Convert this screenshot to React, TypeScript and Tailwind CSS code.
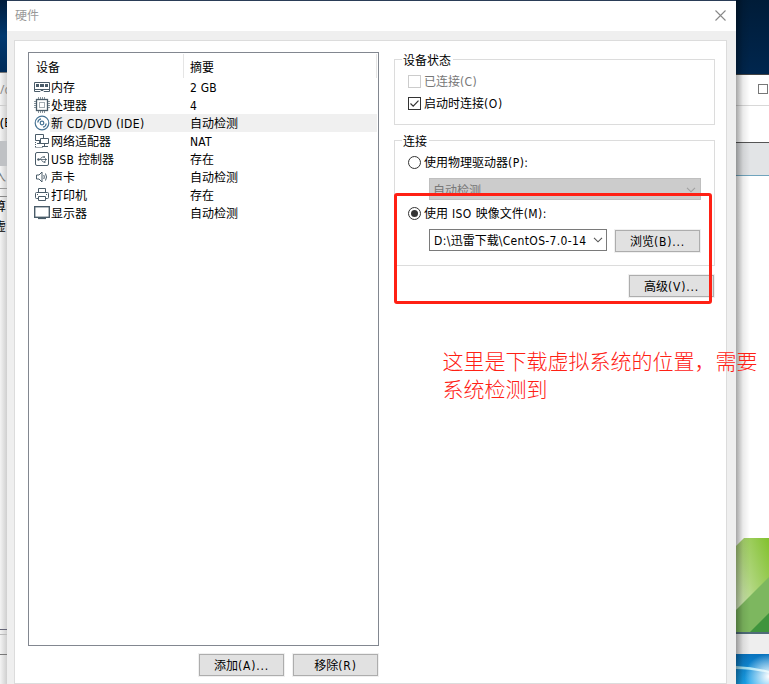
import React from 'react';
import clsx from 'clsx';

const ink = '#4a5c69';

// Latin runs use a narrower Tahoma-like face next to the Chinese
function Label({ text, className = 'tracking-[0.35px]' }: { text: string; className?: string }) {
  const runs = text.split(/([\u4e00-\u9fff]+)/).filter(Boolean);
  return (
    <span className="relative top-px whitespace-pre text-[12px] leading-[18px]">
      {runs.map((run, i) => (
        <span key={i} className={/[\u4e00-\u9fff]/.test(run) ? '' : clsx("font-['DejaVu_Sans_Condensed','Noto_Sans',sans-serif] leading-none", className)}>{run}</span>
      ))}
    </span>
  );
}

const icons: Record<string, React.ReactNode> = {
  memory: (
    <>
      <path d="M.5 3.5h15v9H10l-1-1H7l-1 1H.5z" fill="#fff" stroke={ink} />
      <path d="M2 5h3v3H2zM6 5h4v3H6zM11 5h3v3h-3z" fill={ink} />
      <path d="M1 10.5h14" stroke={ink} />
    </>
  ),
  cpu: (
    <>
      <path d="M4.5 0v16M6.5 0v16M8.5 0v16M10.5 0v16M0 4.5h16M0 6.5h16M0 8.5h16M0 10.5h16" stroke="#8a969e" />
      <rect x="2.5" y="2.5" width="11" height="11" fill="#fff" stroke={ink} strokeWidth="1.3" />
      <rect x="5.500" y="5.500" width="5" height="5" fill="none" stroke={ink} strokeDasharray="1 1" />
    </>
  ),
  disc: (
    <>
      <circle cx="8" cy="8" r="6.8" fill="#fff" stroke="#467394" strokeWidth="1.2" />
      <circle cx="8" cy="8" r="1.8" fill="none" stroke="#467394" strokeWidth="1.2" />
      <path d="M3.8 7.5A4 4 0 0 1 7 3.9M12.2 8.5A4 4 0 0 1 9 12.1" fill="none" stroke="#467394" strokeWidth="1.2" />
    </>
  ),
  network: (
    <>
      <path d="M1.5 1.5h8v6h-8zM5.5 7.5v3M3 10.5h4" fill="#fff" stroke={ink} />
      <path d="M6.5 5.5h8v5h-8zM10.5 10.5v3M8 13.5h6" fill="#fff" stroke={ink} />
      <path d="M1.5 9v6M1.5 14.5h7" fill="none" stroke={ink} strokeDasharray="1 1" />
    </>
  ),
  usb: (
    <>
      <rect x="1.5" y="1.5" width="13" height="13" rx="1.5" fill="#fff" stroke={ink} />
      <path d="M3.5 8.5h9M6 8.5l2-2.500h2M7 8.500l2 2.500h1.500" fill="none" stroke={ink} strokeWidth=".8" />
      <circle cx="4.500" cy="8.500" r="1.200" fill={ink} />
      <path d="M11 7l2 1.500-2 1.500zM9.500 5.200h1.500v1.500H9.500zM10 10.200h1.500v1.500H10z" fill={ink} />
    </>
  ),
  sound: (
    <>
      <path d="M2.5 6v4H5l3 3V3L5 6z" fill="#fff" stroke={ink} />
      <path d="M9.800 6q1 2 0 4M11.500 4.500q2 3.500 0 7" fill="none" stroke={ink} />
    </>
  ),
  printer: (
    <>
      <path d="M4.500 5.500v-4h7v4" fill="#fff" stroke={ink} />
      <rect x="1.500" y="5.500" width="13" height="6" rx="1" fill="#fff" stroke={ink} />
      <path d="M4.500 9.500h7v4h-7z" fill="#fff" stroke={ink} />
      <path d="M3 7.500h1M12 7.500h1" stroke={ink} />
    </>
  ),
  display: (
    <>
      <rect x=".7" y="1.700" width="14.600" height="10.600" fill="#fff" stroke={ink} strokeWidth="1.400" />
      <path d="M4 13.500h8" stroke={ink} strokeWidth="1.200" />
    </>
  ),
};

const devices = [
  { icon: 'memory', name: '内存', summary: '2 GB' },
  { icon: 'cpu', name: '处理器', summary: '4' },
  { icon: 'disc', name: '新 CD/DVD (IDE)', summary: '自动检测', selected: true },
  { icon: 'network', name: '网络适配器', summary: 'NAT' },
  { icon: 'usb', name: 'USB 控制器', summary: '存在' },
  { icon: 'sound', name: '声卡', summary: '自动检测' },
  { icon: 'printer', name: '打印机', summary: '存在' },
  { icon: 'display', name: '显示器', summary: '自动检测' },
];

function Button({ text, className }: { text: string; className?: string }) {
  return (
    <button className={clsx('flex h-[22px] w-[85px] shrink-0 items-center justify-center border border-[#adadad] bg-[#e1e1e1] outline outline-1 outline-[#f0f0f0]', className)}>
      <Label text={text} className="tracking-[0.8px]" />
    </button>
  );
}

function Chevron({ color }: { color: string }) {
  return (
    <svg width="10" height="6" viewBox="0 0 10 6" fill="none" stroke={color} strokeWidth="1.1">
      <path d="M1 .8l4 4 4-4" />
    </svg>
  );
}

function DeviceList() {
  return (
    <div className="h-[594px] w-[351px] border border-[#828790] bg-white">
      <div className="flex h-[25px] pt-px">
        <div className="flex w-[155px] items-center border-r border-[#e5e5e5] pl-[7px] pt-px"><Label text="设备" /></div>
        <div className="flex w-[193px] items-center border-r border-[#e5e5e5] pl-1.5 pt-px"><Label text="摘要" /></div>
      </div>
      {devices.map((d) => (
        <div key={d.name} className="flex h-[18px] items-center pl-[5px] pr-px">
          <svg width="16" height="16" viewBox="0 0 16 16" className="shrink-0">{icons[d.icon]}</svg>
          <div className={clsx('flex h-[18px] flex-1 items-center pl-px', d.selected && 'bg-[#f0f0f0]')}>
            <div className="flex w-[139px]"><Label text={d.name} /></div>
            <Label text={d.summary} className="tracking-[0.2px]" />
          </div>
        </div>
      ))}
    </div>
  );
}

function Group({ title, className, children }: { title: string; className?: string; children: React.ReactNode }) {
  return (
    <div className={clsx('relative w-[321px] border border-[#dcdcdc]', className)}>
      <span className="absolute -top-2.5 left-[7px] flex h-5 items-center bg-white px-px pr-0.5"><Label text={title} /></span>
      {children}
    </div>
  );
}

function Radio({ checked, text }: { checked?: boolean; text: string }) {
  return (
    <div className="flex h-5 items-center gap-[3px]">
      <span className="flex size-[13px] items-center justify-center rounded-full border border-[#333] bg-white">
        {checked && <span className="size-[7px] rounded-full bg-[#333]" />}
      </span>
      <Label text={text} className="tracking-[0.45px]" />
    </div>
  );
}

function Settings() {
  return (
    <div className="relative flex w-[321px] flex-col">
      <Group title="设备状态" className="mt-[7px] h-[66px]">
        <div className="flex flex-col gap-0.5 pl-[13px] pt-[11px]">
          <div className="flex h-5 items-center gap-[3px] text-[#777]">
            <span className="size-[13px] border border-[#ccc]" />
            <Label text="已连接(C)" />
          </div>
          <div className="flex h-5 items-center gap-[3px]">
            <span className="flex size-[13px] items-center justify-center border border-[#333]">
              <svg width="11" height="11" viewBox="0 0 11 11" fill="none" stroke="#333" strokeWidth="1.2"><path d="M1.500 5.500l2.700 2.700 5.300-5.600" /></svg>
            </span>
            <Label text="启动时连接(O)" className="tracking-[0.6px]" />
          </div>
        </div>
      </Group>
      <Group title="连接" className="mt-[15px] h-[126px] pl-[13px] pt-[11px]">
        <Radio text="使用物理驱动器(P):" />
        <div className="ml-[21px] mt-1.5 flex h-[22px] w-[272px] items-center justify-between border border-[#bfbfbf] bg-[#ccc] pl-[3px] pr-1 pt-px text-[#777]">
          <Label text="自动检测" />
          <Chevron color="#a0a0a0" />
        </div>
        <div className="mt-[3px]"><Radio checked text="使用 ISO 映像文件(M):" /></div>
        <div className="ml-[21px] mt-1.5 flex gap-2">
          <div className="flex h-[22px] w-[178px] items-center justify-between border border-[#7a7a7a] bg-white pl-1 pr-[3px]">
            <div className="-mt-px flex w-[154px]"><Label text="D:\迅雷下载\CentOS-7.0-14" /></div>
            <Chevron color="#555" />
          </div>
          <Button text="浏览(B)..." className="mt-px" />
        </div>
      </Group>
      <Button text="高级(V)..." className="ml-[235px] mt-[9px]" />
      {/* highlighted region and its note */}
      <div className="absolute left-0 top-[141px] h-[111px] w-[318px] rounded-[3px] border-3 border-[#ff2014]" />
      <p className="absolute left-[48.500px] top-[295px] whitespace-nowrap text-[21px] leading-[28px] font-light text-[#ff2014]">
        这里是下载虚拟系统的位置，需要<br />系统检测到
      </p>
    </div>
  );
}

function LeftEdge() {
  return (
    <div className="flex w-[7px] shrink-0 flex-col overflow-hidden bg-linear-to-r from-[#f4f4f4] to-[#cfcfcf] whitespace-nowrap">
      <div className="h-[72px] shrink-0 bg-linear-to-b from-[#001c3c] via-[#00386f] to-[#002b59]" />
      <div className="h-[34px] shrink-0 border-t border-b border-t-[#777] border-b-[#ccc] pt-2 text-[12px] leading-[18px] text-[#888]">/c</div>
      <div className="h-[35px] shrink-0 pt-[7px] text-[13px] leading-[18px]">(E</div>
      <div className="h-[25px] shrink-0 bg-[#bfc1c4]" />
      <div className="h-[23px] shrink-0 border-b border-[#999] text-[12px] leading-[22px] text-[#777]"><span className="-ml-1.5">入</span></div>
      <div className="mt-[7px] h-[433px] shrink-0 border-t border-[#888] text-[12px] leading-5"><div className="-ml-1.5">算</div><div className="-ml-1.5">虚</div></div>
      <div className="h-[6px] shrink-0 border-t border-b border-t-[#667] border-b-[#bbb]" />
      <div className="h-[20px] shrink-0 border-b border-[#777]" />
    </div>
  );
}

function RightEdge() {
  return (
    <div className="relative flex w-[33px] shrink-0 flex-col overflow-hidden bg-white">
      <div className="h-[74px] bg-linear-to-b from-[#001c38] to-[#00264e]" />
      <div className="flex h-8 justify-end border-t border-b border-t-[#444] border-b-[#d8d8d8] pr-px pt-[9px]">
        <span className="size-2.5 border border-[#777]" />
      </div>
      <div className="mt-[36px] h-[34px] border-t border-b border-t-[#555] border-b-[#6fa4bd] bg-[#e2e4e6]" />
      <svg width="33" height="94" viewBox="0 0 33 94" className="mt-[362px] shrink-0">
        <defs>
          <linearGradient id="leaf" x1="1" y1="0" x2="0" y2="1">
            <stop offset="0" stopColor="#82c12e" />
            <stop offset=".5" stopColor="#aed57b" />
            <stop offset="1" stopColor="#e8f3dd" />
          </linearGradient>
        </defs>
        <path d="M0 8L8 0h25v94H0z" fill="url(#leaf)" />
        <path d="M0 72L33 39v55H0z" fill="#7db75f" />
        <path d="M14 94L33 75v19z" fill="#3f943d" />
      </svg>
      <div className="h-[22px] border-t-2 border-[#4f6c79] bg-[#eee]" />
      <svg width="33" height="30" viewBox="0 0 33 30" className="shrink-0">
        <defs>
          <linearGradient id="sky" x1="0" y1="0" x2="0" y2="1">
            <stop offset="0" stopColor="#0872bd" />
            <stop offset="1" stopColor="#1aa6ef" />
          </linearGradient>
          <radialGradient id="glow" cx="1" cy=".75" r=".75">
            <stop offset="0" stopColor="#fff" />
            <stop offset="1" stopColor="#fff" stopOpacity="0" />
          </radialGradient>
        </defs>
        <path d="M0 0h33v30H0z" fill="url(#sky)" />
        <path d="M0 12q18 1 33 5v2Q15 15 0 15z" fill="#a5e3f5" />
        <path d="M0 0h33v30H0z" fill="url(#glow)" />
      </svg>
      <div className="absolute inset-y-0 left-0 w-3.5 bg-linear-to-r from-black/35 via-black/8 to-transparent" />
    </div>
  );
}

export default function App() {
  return (
    <div className="flex h-[684px] w-[769px] overflow-hidden bg-white font-['Noto_Sans','Noto_Sans_CJK_SC',sans-serif] text-black">
      <LeftEdge />
      <div className="relative z-10 flex w-[729px] shrink-0 flex-col border-t border-[#2a3d57] bg-[#efefef]">
        <div className="flex h-[30px] shrink-0 items-center justify-between bg-white pb-px pl-2 pr-2.5">
          <span className="text-[12px] text-[#999]">硬件</span>
          <svg width="11" height="11" viewBox="0 0 11 11" stroke="#888" strokeWidth="1.1"><path d="M.5.5l10 10M10.500.5l-10 10" /></svg>
        </div>
        <div className="ml-[7px] mt-[9px] flex h-[660px] w-[713px] gap-[15px] border border-[#dcdcdc] bg-white pl-[13px] pt-[11px]">
          <div className="w-[351px] shrink-0">
            <DeviceList />
            <div className="mt-2 flex justify-end gap-[9px] pr-px">
              <Button text="添加(A)..." />
              <Button text="移除(R)" />
            </div>
          </div>
          <Settings />
        </div>
      </div>
      <RightEdge />
    </div>
  );
}
